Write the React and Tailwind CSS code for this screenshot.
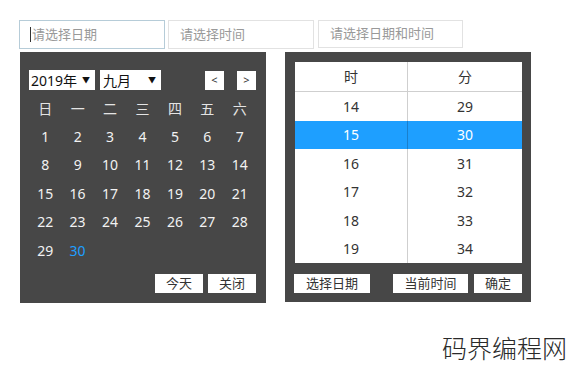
const days = Array.from({ length: 30 }, (_, i) => i + 1);
const weekdays = ["日", "一", "二", "三", "四", "五", "六"];
const hours = [14, 15, 16, 17, 18, 19];
const minutes = [29, 30, 31, 32, 33, 34];

const font = { fontFamily: '"Noto Sans", "Noto Sans CJK SC", sans-serif' };

function SmallButton({ children, className = "" }) {
    return (
        <button
            type="button"
            className={`h-[19px] bg-white text-[13px] leading-[19px] text-[#333] ${className}`}
        >
            {children}
        </button>
    );
}

export default function App() {
    return (
        <div
            className="relative w-[569px] h-[369px] overflow-hidden bg-white pl-[19px] pt-[20px]"
            style={font}
        >
            {/* Inputs */}
            <div className="flex gap-[3px]">
                <div className="w-[146px] h-[29px] border border-[#b6ccd8] flex items-center pl-[10px] text-[13px] text-[#999]">
                    <span className="w-px h-[15px] bg-[#333] mr-px" />
                    请选择日期
                </div>
                <div className="w-[146px] h-[29px] border border-[#e2e2e2] flex items-center pl-[11px] text-[13px] text-[#999]">
                    请选择时间
                </div>
                <div className="ml-px w-[145px] h-[28px] border border-[#e2e2e2] flex items-center pl-[11px] text-[13px] text-[#999]">
                    请选择日期和时间
                </div>
            </div>

            <div className="flex gap-[19px] mt-[3px] ml-px">
                {/* Date panel */}
                <div className="w-[246px] h-[251px] bg-[#474747] pt-[18px] px-[9px] flex flex-col">
                    <div className="flex items-center h-[20px]">
                        <div className="w-[66px] h-[20px] bg-white flex items-center justify-between pl-[2px] pr-[5px] text-[14px] text-[#111]">
                            <span>2019年</span>
                            <span className="text-[8px]">▼</span>
                        </div>
                        <div className="ml-[5px] w-[61px] h-[20px] bg-white flex items-center justify-between pl-[3px] pr-[5px] text-[14px] text-[#111]">
                            <span>九月</span>
                            <span className="text-[8px]">▼</span>
                        </div>
                        <div className="ml-auto flex gap-[13px] mr-[1px]">
                            <div className="w-[19px] h-[19px] bg-white flex items-center justify-center text-[11px] text-[#333]">
                                &lt;
                            </div>
                            <div className="w-[19px] h-[19px] bg-white flex items-center justify-center text-[11px] text-[#333]">
                                &gt;
                            </div>
                        </div>
                    </div>

                    <div className="mt-[4px] grid grid-cols-7 w-[227px] auto-rows-[28.4px] text-[14px]">
                        {weekdays.map((w) => (
                            <div key={w} className="flex items-center justify-center text-[#e4e4e4]">
                                {w}
                            </div>
                        ))}
                        {days.map((d) => (
                            <div
                                key={d}
                                className={`flex items-center justify-center ${
                                    d === 30 ? "text-[#1e9fff]" : "text-[#f2f2f2]"
                                }`}
                            >
                                {d}
                            </div>
                        ))}
                    </div>

                    <div className="mt-auto mb-[10px] flex justify-end gap-[5px] pr-px">
                        <SmallButton className="w-[48px]">今天</SmallButton>
                        <SmallButton className="w-[48px]">关闭</SmallButton>
                    </div>
                </div>

                {/* Time panel */}
                <div className="w-[246px] h-[250px] bg-[#474747] pt-[10px] pl-[10px] pr-[9px] flex flex-col">
                    <div className="w-[227px] bg-white text-[14px] text-[#333]">
                        <div className="grid grid-cols-[113px_1fr] h-[30px] border-b border-[#cfcfcf]">
                            <div className="flex items-center justify-center border-r border-[#cfcfcf]">时</div>
                            <div className="flex items-center justify-center">分</div>
                        </div>
                        {hours.map((h, i) => {
                            const active = h === 15;
                            return (
                                <div
                                    key={h}
                                    className={`grid grid-cols-[113px_1fr] h-[28.5px] ${
                                        active ? "bg-[#1e9fff] text-white" : ""
                                    }`}
                                >
                                    <div
                                        className={`flex items-center justify-center border-r ${
                                            active ? "border-[#1a7fcc]" : "border-[#cfcfcf]"
                                        }`}
                                    >
                                        {h}
                                    </div>
                                    <div className="flex items-center justify-center">{minutes[i]}</div>
                                </div>
                            );
                        })}
                    </div>

                    <div className="mt-auto mb-[9px] flex items-center">
                        <SmallButton className="w-[76px] -ml-px">选择日期</SmallButton>
                        <SmallButton className="w-[75px] ml-auto">当前时间</SmallButton>
                        <SmallButton className="w-[48px] ml-[6px]">确定</SmallButton>
                    </div>
                </div>
            </div>

            {/* Watermark */}
            <div className="absolute left-[442px] top-[331px] text-[25px] leading-[34px] font-light text-[#2a2a2a] whitespace-nowrap">
                码界编程网
            </div>
        </div>
    );
}
